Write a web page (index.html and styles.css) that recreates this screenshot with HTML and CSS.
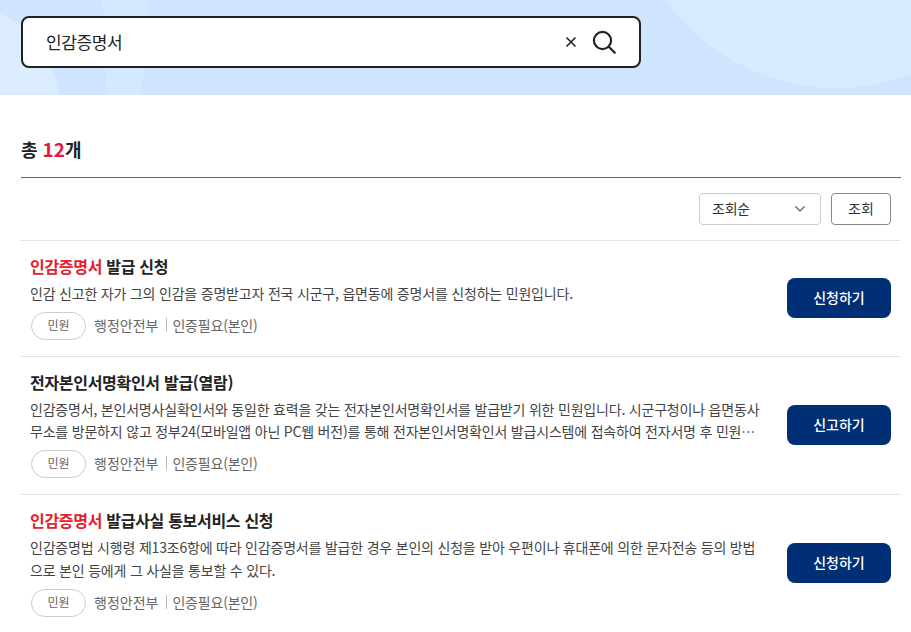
FILE: index.html
```html
<!DOCTYPE html>
<html lang="ko">
<head>
<meta charset="utf-8">
<title>검색</title>
<link rel="stylesheet" href="styles.css">
</head>
<body>
<header class="hero">
  <svg class="decor" width="911" height="95" viewBox="0 0 911 95" aria-hidden="true">
    <path d="M0 14C30 24 52 50 59 95H0Z" fill="#dcecff"/>
    <path d="M102 0C106 30 108 65 105 95H140C146 60 150 30 148 0Z" fill="#d4e8ff"/>
    <circle cx="837" cy="-124" r="212" fill="#d8eaff"/>
  </svg>
  <form class="search">
    <span class="search-text">인감증명서</span>
    <svg class="icon-clear" width="12" height="12" viewBox="0 0 12 12"><path d="M1.5 1.5l9 9M10.5 1.5l-9 9" fill="none" stroke="#222" stroke-width="1.6"/></svg>
    <svg class="icon-search" width="26" height="26" viewBox="0 0 26 26"><circle cx="11.5" cy="11.5" r="8.6" fill="none" stroke="#222" stroke-width="2.2"/><path d="M17.8 17.8l6 6" fill="none" stroke="#222" stroke-width="2.2" stroke-linecap="round"/></svg>
  </form>
</header>
<main class="content">
  <h2 class="total">총 <em>12</em>개</h2>
  <div class="toolbar">
    <div class="select"><span>조회순</span><svg width="10" height="6" viewBox="0 0 10 6"><path d="M.5.5L5 5 9.500.5" fill="none" stroke="#555" stroke-width="1.100"/></svg></div>
    <button class="btn-query" type="button"><span>조회</span></button>
  </div>
  <ul class="list">
    <li class="item">
      <div class="body">
        <h3 class="title"><mark>인감증명서</mark> 발급 신청</h3>
        <p class="desc">인감 신고한 자가 그의 인감을 증명받고자 전국 시군구, 읍면동에 증명서를 신청하는 민원입니다.</p>
        <div class="meta"><span class="tag">민원</span><span class="org">행정안전부</span><span class="auth">인증필요(본인)</span></div>
      </div>
      <a class="action">신청하기</a>
    </li>
    <li class="item">
      <div class="body">
        <h3 class="title">전자본인서명확인서 발급(열람)</h3>
        <p class="desc">인감증명서, 본인서명사실확인서와 동일한 효력을 갖는 전자본인서명확인서를 발급받기 위한 민원입니다. 시군구청이나 읍면동사무소를 방문하지 않고 정부24(모바일앱 아닌 PC웹 버전)를 통해 전자본인서명확인서 발급시스템에 접속하여 전자서명 후 민원…</p>
        <div class="meta"><span class="tag">민원</span><span class="org">행정안전부</span><span class="auth">인증필요(본인)</span></div>
      </div>
      <a class="action">신고하기</a>
    </li>
    <li class="item">
      <div class="body">
        <h3 class="title"><mark>인감증명서</mark> 발급사실 통보서비스 신청</h3>
        <p class="desc">인감증명법 시행령 제13조6항에 따라 인감증명서를 발급한 경우 본인의 신청을 받아 우편이나 휴대폰에 의한 문자전송 등의 방법으로 본인 등에게 그 사실을 통보할 수 있다.</p>
        <div class="meta"><span class="tag">민원</span><span class="org">행정안전부</span><span class="auth">인증필요(본인)</span></div>
      </div>
      <a class="action">신청하기</a>
    </li>
  </ul>
</main>
</body>
</html>
```
FILE: styles.css
```css
* { box-sizing: border-box; }
html, body { margin: 0; padding: 0; }
body {
  width: 911px;
  height: 632px;
  overflow: hidden;
  background: #fff;
  color: #222;
  font-family: "Noto Sans CJK KR", "Noto Sans", sans-serif;
}
.hero {
  position: relative;
  height: 95px;
  padding: 16px 0 0 21px;
  overflow: hidden;
  background: #cfe5fe;
}
.decor { position: absolute; left: 0; top: 0; }
.search {
  position: relative;
  display: flex;
  align-items: center;
  width: 620px;
  height: 52px;
  padding: 0 22.5px 0 23px;
  background: #fff;
  border: 2px solid #222;
  border-radius: 8px;
}
.search-text { flex: 1; padding-bottom: 2px; font-size: 17px; letter-spacing: -0.4px; color: #222; }
.icon-clear { margin-right: 13.5px; }
.content { padding: 0 10px 0 21px; }
.total {
  margin: 0;
  height: 83px;
  padding: 40px 0 0;
  font-size: 18px;
  line-height: 27px;
  font-weight: 700;
  color: #222;
  border-bottom: 1px solid #666;
}
.total em { font-style: normal; font-size: 19px; color: #e6173c; }
.toolbar {
  display: flex;
  justify-content: flex-end;
  gap: 10px;
  padding: 15px 10px 15px 0;
}
.select {
  display: flex;
  align-items: center;
  justify-content: space-between;
  width: 122px;
  height: 32px;
  padding: 0 15px 0 12px;
  font-size: 14px;
  letter-spacing: -0.2px;
  color: #333;
  background: #fff;
  border: 1px solid #ccc;
  border-radius: 4px;
}
.select span { padding-bottom: 2px; }
.btn-query {
  width: 60px;
  height: 32px;
  padding: 0 0 3px;
  font: inherit;
  font-size: 14px;
  color: #333;
  background: #fff;
  border: 1px solid #888;
  border-radius: 4px;
}
.list { margin: 0; padding: 0; list-style: none; }
.item {
  display: flex;
  align-items: center;
  justify-content: space-between;
  padding: 14px 10px 16px 9px;
  border-top: 1px solid #e2e2e2;
}
.body { width: 732px; }
.title {
  margin: 0;
  font-size: 16px;
  line-height: 22px;
  font-weight: 700;
  letter-spacing: -0.3px;
  color: #222;
}
.title mark { background: none; color: #e6202c; }
.desc {
  margin: 5px 0 0;
  font-size: 14px;
  line-height: 22.4px;
  letter-spacing: -0.2px;
  color: #444;
}
.meta {
  display: flex;
  align-items: center;
  margin-top: 7.6px;
  font-size: 14px;
  color: #666;
}
.tag {
  width: 55px;
  height: 28px;
  margin: 0 8px 0 1px;
  font-size: 12px;
  line-height: 24px;
  text-align: center;
  color: #666;
  background: #fff;
  border: 1px solid #ccc;
  border-radius: 14px;
}
.org { padding-right: 8px; margin-bottom: 2px; }
.auth {
  margin-bottom: 2px;
  padding-left: 5px;
  line-height: 14px;
  letter-spacing: -0.2px;
  border-left: 1px solid #bbb;
}
.action {
  display: flex;
  align-items: center;
  justify-content: center;
  width: 104px;
  height: 40px;
  padding-bottom: 2px;
  font-size: 14px;
  font-weight: 500;
  color: #fff;
  background: #002f75;
  border-radius: 8px;
}
```
